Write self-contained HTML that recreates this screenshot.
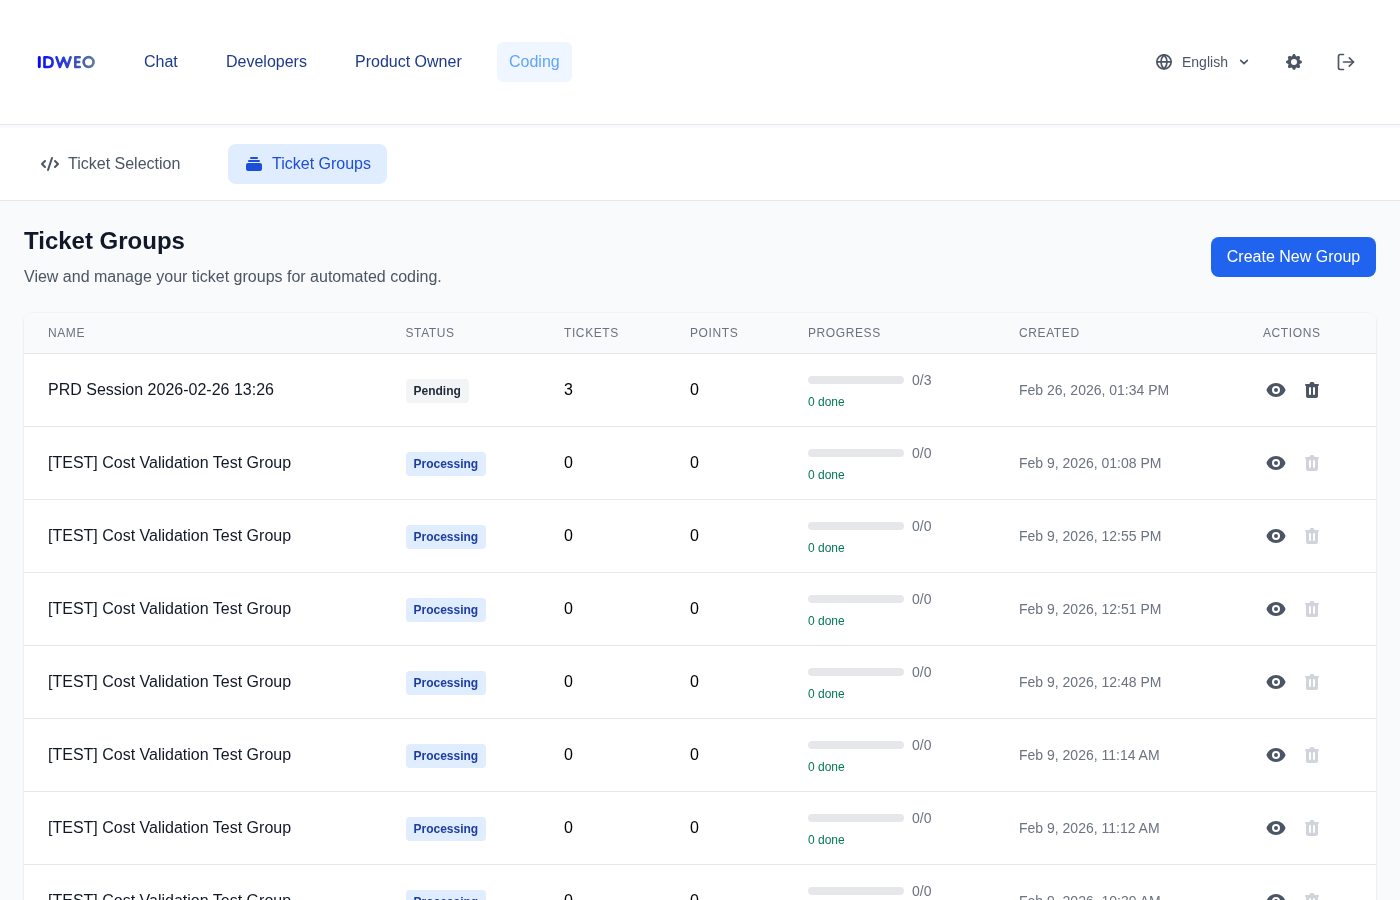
<!DOCTYPE html>
<html lang="en">
<head>
<meta charset="utf-8">
<title>IDWEO - Ticket Groups</title>
<style>
*{box-sizing:border-box;margin:0;padding:0}
html,body{width:1400px;height:900px;overflow:hidden}
body{font-family:"Liberation Sans",sans-serif;background:#f9fafb;color:#111827;position:relative;-webkit-font-smoothing:antialiased;will-change:transform}
svg{display:block}
/* ---------- top header ---------- */
.top{position:absolute;left:0;top:0;width:1400px;height:125px;background:#fff;border-bottom:1px solid #e5e7eb}
.nav{position:absolute;top:42px;height:40px;line-height:40px;padding:0 12px;font-size:16px;color:#1e3a8a;border-radius:6px;white-space:nowrap}
.nav.on{background:#eff6ff;color:#60a5fa}
.lang{position:absolute;left:1182px;top:52px;height:20px;line-height:20px;font-size:14px;color:#4b5563}
.ico{position:absolute}
/* ---------- sub nav ---------- */
.sub{position:absolute;left:0;top:128px;width:1400px;height:73px;background:#fff;border-bottom:1px solid #e5e7eb}
.tab{position:absolute;top:16px;height:40px;line-height:40px;padding:0 16px 0 44px;font-size:16px;color:#4b5563;border-radius:8px;white-space:nowrap}
.tab svg{position:absolute;left:16px;top:10px}
.tab.on{background:#e0edfe;color:#1d4ed8}
/* ---------- page head ---------- */
h1{position:absolute;left:24px;top:225px;font-size:24px;line-height:32px;font-weight:700;color:#111827;white-space:nowrap}
.desc{position:absolute;left:24px;top:265px;font-size:16px;line-height:24px;color:#4b5563;white-space:nowrap}
.btn{position:absolute;left:1211px;top:237px;width:165px;height:40px;line-height:40px;text-align:center;background:#2063ee;color:#fff;font-size:16px;border-radius:8px;white-space:nowrap}
/* ---------- table card ---------- */
.card{position:absolute;left:24px;top:313px;width:1352px;height:640px;background:#fff;border-radius:8px;box-shadow:0 0 0 1px rgba(0,0,0,.025),0 1px 3px rgba(0,0,0,.07);overflow:hidden}
.thead{position:absolute;left:0;top:0;width:100%;height:41px;background:#f9fafb;border-bottom:1px solid #e5e7eb}
.th{position:absolute;top:12px;font-size:12px;line-height:16px;letter-spacing:.6px;color:#6b7280;text-transform:uppercase;white-space:nowrap}
.row{position:absolute;left:0;width:100%;height:73px;border-bottom:1px solid #e5e7eb}
.c{position:absolute;white-space:nowrap}
.name{left:24px;top:24px;font-size:16px;line-height:24px;color:#111827}
.badge{left:381.5px;top:25px;height:24px;line-height:24px;padding:0 8px;font-size:12px;font-weight:700;border-radius:4px}
.badge.pend{background:#f3f4f6;color:#1f2937}
.badge.proc{background:#e0edfe;color:#1d3da3}
.num{top:24px;font-size:16px;line-height:24px;color:#000}
.bar{left:784px;top:22px;width:96px;height:8px;border-radius:4px;background:#e5e7eb}
.frac{left:888px;top:16px;font-size:14px;line-height:20px;color:#6b7280}
.done{left:784px;top:40px;font-size:12px;line-height:16px;color:#047857}
.date{left:995px;top:26px;font-size:14px;line-height:20px;color:#6b7280}
.eye{left:1242px;top:26px}
.trash{left:1278px;top:26px}
</style>
</head>
<body>

<div class="top">
  <svg class="ico" style="left:34px;top:52px" width="66" height="20" viewBox="34 51.75 66 20">
    <defs><linearGradient id="lg" gradientUnits="userSpaceOnUse" x1="37" y1="0" x2="95" y2="0">
      <stop offset="0" stop-color="#0404ff"/><stop offset=".2" stop-color="#1620f0"/><stop offset=".46" stop-color="#2a3cd6"/><stop offset=".72" stop-color="#3f56b6"/><stop offset="1" stop-color="#607e9a"/></linearGradient></defs>
    <g fill="none" stroke="url(#lg)" stroke-linecap="round" stroke-linejoin="round">
      <path stroke-width="2.9" d="M39.300 57.150V66.600"/>
      <path stroke-width="2.600" d="M44.500 56.950V66.800H47.300C50.900 66.800 52.650 64.700 52.650 61.875C52.650 59.050 50.900 56.950 47.300 56.950Z"/>
      <path stroke-width="2.600" d="M56.500 57.000L59.900 66.700 63.550 57.500 67.200 66.700 70.600 57.000"/>
      <path stroke-width="2.500" d="M79.800 56.900H75.300V66.850H79.800M75.300 61.850H79.200"/>
      <ellipse stroke-width="2.700" cx="88.600" cy="61.850" rx="4.950" ry="4.900"/>
    </g>
  </svg>
  <div class="nav" style="left:132px">Chat</div>
  <div class="nav" style="left:214px">Developers</div>
  <div class="nav" style="left:343px">Product Owner</div>
  <div class="nav on" style="left:497px">Coding</div>

  <svg class="ico" style="left:1156px;top:54px" width="16" height="16" viewBox="0 0 16 16" fill="none" stroke="#4b5563" stroke-width="1.700" stroke-linecap="round" stroke-linejoin="round"><circle cx="8" cy="7.900" r="7.100"/><path d="M0.900 7.900h14.200"/><path d="M8 0.800C9.900 2.800 11.050 5.300 11.050 7.900C11.050 10.500 9.900 13.000 8 15.000C6.100 13.000 4.950 10.500 4.950 7.900C4.950 5.300 6.100 2.800 8 0.800Z"/></svg>
  <div class="lang">English</div>
  <svg class="ico" style="left:1236px;top:54px" width="16" height="16" viewBox="0 0 24 24" fill="none" stroke="#4b5563" stroke-width="2.4" stroke-linecap="round" stroke-linejoin="round"><path d="M7 9.5l5 5 5-5"/></svg>

  <svg class="ico" style="left:1284px;top:52px" width="20" height="20" viewBox="0 0 20 20" fill="#4b5563"><path fill-rule="evenodd" clip-rule="evenodd" d="M11.49 3.17c-.38-1.56-2.6-1.56-2.98 0a1.532 1.532 0 01-2.286.948c-1.372-.836-2.942.734-2.106 2.106.54.886.061 2.042-.947 2.287-1.561.379-1.561 2.6 0 2.978a1.532 1.532 0 01.947 2.287c-.836 1.372.734 2.942 2.106 2.106a1.532 1.532 0 012.287.947c.379 1.561 2.6 1.561 2.978 0a1.533 1.533 0 012.287-.947c1.372.836 2.942-.734 2.106-2.106a1.533 1.533 0 01.947-2.287c1.561-.379 1.561-2.6 0-2.978a1.532 1.532 0 01-.947-2.287c.836-1.372-.734-2.942-2.106-2.106a1.532 1.532 0 01-2.287-.947zM10 13a3 3 0 100-6 3 3 0 000 6z"/></svg>

  <svg class="ico" style="left:1336px;top:52px" width="20" height="20" viewBox="0 0 24 24" fill="none" stroke="#4b5563" stroke-width="2" stroke-linecap="round" stroke-linejoin="round"><path d="M9 21H5a2 2 0 0 1-2-2V5a2 2 0 0 1 2-2h4"/><polyline points="16 17 21 12 16 7"/><line x1="21" y1="12" x2="9" y2="12"/></svg>
</div>

<div class="sub">
  <div class="tab" style="left:24px">
    <svg width="20" height="20" viewBox="0 0 20 20" fill="#4b5563"><path fill-rule="evenodd" d="M12.316 3.051a1 1 0 01.633 1.265l-4 12a1 1 0 11-1.898-.632l4-12a1 1 0 011.265-.633zM5.707 6.293a1 1 0 010 1.414L3.414 10l2.293 2.293a1 1 0 11-1.414 1.414l-3-3a1 1 0 010-1.414l3-3a1 1 0 011.414 0zm8.586 0a1 1 0 011.414 0l3 3a1 1 0 010 1.414l-3 3a1 1 0 11-1.414-1.414L16.586 10l-2.293-2.293a1 1 0 010-1.414z" clip-rule="evenodd"/></svg>
    Ticket Selection
  </div>
  <div class="tab on" style="left:228px">
    <svg width="20" height="20" viewBox="0 0 20 20" fill="#1d4ed8"><path d="M7 3a1 1 0 000 2h6a1 1 0 100-2H7zM4 7a1 1 0 011-1h10a1 1 0 110 2H5a1 1 0 01-1-1zM2 11a2 2 0 012-2h12a2 2 0 012 2v4a2 2 0 01-2 2H4a2 2 0 01-2-2v-4z"/></svg>
    Ticket Groups
  </div>
</div>

<h1>Ticket Groups</h1>
<div class="desc">View and manage your ticket groups for automated coding.</div>
<div class="btn">Create New Group</div>

<div class="card" id="card">
  <div class="thead">
    <div class="th" style="left:24px">Name</div>
    <div class="th" style="left:381.5px">Status</div>
    <div class="th" style="left:540px">Tickets</div>
    <div class="th" style="left:666px">Points</div>
    <div class="th" style="left:784px">Progress</div>
    <div class="th" style="left:995px">Created</div>
    <div class="th" style="left:1239px">Actions</div>
  </div>
  <div class="row" style="top:41px">
    <div class="c name">PRD Session 2026-02-26 13:26</div>
    <div class="c badge pend">Pending</div>
    <div class="c num" style="left:540px">3</div>
    <div class="c num" style="left:666px">0</div>
    <div class="c bar"></div>
    <div class="c frac">0/3</div>
    <div class="c done">0 done</div>
    <div class="c date">Feb 26, 2026, 01:34 PM</div>
    <svg class="c eye" width="20" height="20" viewBox="0 0 20 20" fill="#4b5563"><path d="M10 12a2 2 0 100-4 2 2 0 000 4z"/><path fill-rule="evenodd" d="M.458 10C1.732 5.943 5.522 3 10 3s8.268 2.943 9.542 7c-1.274 4.057-5.064 7-9.542 7S1.732 14.057.458 10zM14 10a4 4 0 11-8 0 4 4 0 018 0z" clip-rule="evenodd"/></svg>
    <svg class="c trash" width="20" height="20" viewBox="0 0 20 20" fill="#4b5563"><path fill-rule="evenodd" d="M9 2a1 1 0 00-.894.553L7.382 4H4a1 1 0 000 2v10a2 2 0 002 2h8a2 2 0 002-2V6a1 1 0 100-2h-3.382l-.724-1.447A1 1 0 0011 2H9zM7 8a1 1 0 012 0v6a1 1 0 11-2 0V8zm5-1a1 1 0 00-1 1v6a1 1 0 102 0V8a1 1 0 00-1-1z" clip-rule="evenodd"/></svg>
  </div>
  <div class="row" style="top:114px">
    <div class="c name">[TEST] Cost Validation Test Group</div>
    <div class="c badge proc">Processing</div>
    <div class="c num" style="left:540px">0</div>
    <div class="c num" style="left:666px">0</div>
    <div class="c bar"></div>
    <div class="c frac">0/0</div>
    <div class="c done">0 done</div>
    <div class="c date">Feb 9, 2026, 01:08 PM</div>
    <svg class="c eye" width="20" height="20" viewBox="0 0 20 20" fill="#4b5563"><path d="M10 12a2 2 0 100-4 2 2 0 000 4z"/><path fill-rule="evenodd" d="M.458 10C1.732 5.943 5.522 3 10 3s8.268 2.943 9.542 7c-1.274 4.057-5.064 7-9.542 7S1.732 14.057.458 10zM14 10a4 4 0 11-8 0 4 4 0 018 0z" clip-rule="evenodd"/></svg>
    <svg class="c trash" width="20" height="20" viewBox="0 0 20 20" fill="#d1d5db"><path fill-rule="evenodd" d="M9 2a1 1 0 00-.894.553L7.382 4H4a1 1 0 000 2v10a2 2 0 002 2h8a2 2 0 002-2V6a1 1 0 100-2h-3.382l-.724-1.447A1 1 0 0011 2H9zM7 8a1 1 0 012 0v6a1 1 0 11-2 0V8zm5-1a1 1 0 00-1 1v6a1 1 0 102 0V8a1 1 0 00-1-1z" clip-rule="evenodd"/></svg>
  </div>
  <div class="row" style="top:187px">
    <div class="c name">[TEST] Cost Validation Test Group</div>
    <div class="c badge proc">Processing</div>
    <div class="c num" style="left:540px">0</div>
    <div class="c num" style="left:666px">0</div>
    <div class="c bar"></div>
    <div class="c frac">0/0</div>
    <div class="c done">0 done</div>
    <div class="c date">Feb 9, 2026, 12:55 PM</div>
    <svg class="c eye" width="20" height="20" viewBox="0 0 20 20" fill="#4b5563"><path d="M10 12a2 2 0 100-4 2 2 0 000 4z"/><path fill-rule="evenodd" d="M.458 10C1.732 5.943 5.522 3 10 3s8.268 2.943 9.542 7c-1.274 4.057-5.064 7-9.542 7S1.732 14.057.458 10zM14 10a4 4 0 11-8 0 4 4 0 018 0z" clip-rule="evenodd"/></svg>
    <svg class="c trash" width="20" height="20" viewBox="0 0 20 20" fill="#d1d5db"><path fill-rule="evenodd" d="M9 2a1 1 0 00-.894.553L7.382 4H4a1 1 0 000 2v10a2 2 0 002 2h8a2 2 0 002-2V6a1 1 0 100-2h-3.382l-.724-1.447A1 1 0 0011 2H9zM7 8a1 1 0 012 0v6a1 1 0 11-2 0V8zm5-1a1 1 0 00-1 1v6a1 1 0 102 0V8a1 1 0 00-1-1z" clip-rule="evenodd"/></svg>
  </div>
  <div class="row" style="top:260px">
    <div class="c name">[TEST] Cost Validation Test Group</div>
    <div class="c badge proc">Processing</div>
    <div class="c num" style="left:540px">0</div>
    <div class="c num" style="left:666px">0</div>
    <div class="c bar"></div>
    <div class="c frac">0/0</div>
    <div class="c done">0 done</div>
    <div class="c date">Feb 9, 2026, 12:51 PM</div>
    <svg class="c eye" width="20" height="20" viewBox="0 0 20 20" fill="#4b5563"><path d="M10 12a2 2 0 100-4 2 2 0 000 4z"/><path fill-rule="evenodd" d="M.458 10C1.732 5.943 5.522 3 10 3s8.268 2.943 9.542 7c-1.274 4.057-5.064 7-9.542 7S1.732 14.057.458 10zM14 10a4 4 0 11-8 0 4 4 0 018 0z" clip-rule="evenodd"/></svg>
    <svg class="c trash" width="20" height="20" viewBox="0 0 20 20" fill="#d1d5db"><path fill-rule="evenodd" d="M9 2a1 1 0 00-.894.553L7.382 4H4a1 1 0 000 2v10a2 2 0 002 2h8a2 2 0 002-2V6a1 1 0 100-2h-3.382l-.724-1.447A1 1 0 0011 2H9zM7 8a1 1 0 012 0v6a1 1 0 11-2 0V8zm5-1a1 1 0 00-1 1v6a1 1 0 102 0V8a1 1 0 00-1-1z" clip-rule="evenodd"/></svg>
  </div>
  <div class="row" style="top:333px">
    <div class="c name">[TEST] Cost Validation Test Group</div>
    <div class="c badge proc">Processing</div>
    <div class="c num" style="left:540px">0</div>
    <div class="c num" style="left:666px">0</div>
    <div class="c bar"></div>
    <div class="c frac">0/0</div>
    <div class="c done">0 done</div>
    <div class="c date">Feb 9, 2026, 12:48 PM</div>
    <svg class="c eye" width="20" height="20" viewBox="0 0 20 20" fill="#4b5563"><path d="M10 12a2 2 0 100-4 2 2 0 000 4z"/><path fill-rule="evenodd" d="M.458 10C1.732 5.943 5.522 3 10 3s8.268 2.943 9.542 7c-1.274 4.057-5.064 7-9.542 7S1.732 14.057.458 10zM14 10a4 4 0 11-8 0 4 4 0 018 0z" clip-rule="evenodd"/></svg>
    <svg class="c trash" width="20" height="20" viewBox="0 0 20 20" fill="#d1d5db"><path fill-rule="evenodd" d="M9 2a1 1 0 00-.894.553L7.382 4H4a1 1 0 000 2v10a2 2 0 002 2h8a2 2 0 002-2V6a1 1 0 100-2h-3.382l-.724-1.447A1 1 0 0011 2H9zM7 8a1 1 0 012 0v6a1 1 0 11-2 0V8zm5-1a1 1 0 00-1 1v6a1 1 0 102 0V8a1 1 0 00-1-1z" clip-rule="evenodd"/></svg>
  </div>
  <div class="row" style="top:406px">
    <div class="c name">[TEST] Cost Validation Test Group</div>
    <div class="c badge proc">Processing</div>
    <div class="c num" style="left:540px">0</div>
    <div class="c num" style="left:666px">0</div>
    <div class="c bar"></div>
    <div class="c frac">0/0</div>
    <div class="c done">0 done</div>
    <div class="c date">Feb 9, 2026, 11:14 AM</div>
    <svg class="c eye" width="20" height="20" viewBox="0 0 20 20" fill="#4b5563"><path d="M10 12a2 2 0 100-4 2 2 0 000 4z"/><path fill-rule="evenodd" d="M.458 10C1.732 5.943 5.522 3 10 3s8.268 2.943 9.542 7c-1.274 4.057-5.064 7-9.542 7S1.732 14.057.458 10zM14 10a4 4 0 11-8 0 4 4 0 018 0z" clip-rule="evenodd"/></svg>
    <svg class="c trash" width="20" height="20" viewBox="0 0 20 20" fill="#d1d5db"><path fill-rule="evenodd" d="M9 2a1 1 0 00-.894.553L7.382 4H4a1 1 0 000 2v10a2 2 0 002 2h8a2 2 0 002-2V6a1 1 0 100-2h-3.382l-.724-1.447A1 1 0 0011 2H9zM7 8a1 1 0 012 0v6a1 1 0 11-2 0V8zm5-1a1 1 0 00-1 1v6a1 1 0 102 0V8a1 1 0 00-1-1z" clip-rule="evenodd"/></svg>
  </div>
  <div class="row" style="top:479px">
    <div class="c name">[TEST] Cost Validation Test Group</div>
    <div class="c badge proc">Processing</div>
    <div class="c num" style="left:540px">0</div>
    <div class="c num" style="left:666px">0</div>
    <div class="c bar"></div>
    <div class="c frac">0/0</div>
    <div class="c done">0 done</div>
    <div class="c date">Feb 9, 2026, 11:12 AM</div>
    <svg class="c eye" width="20" height="20" viewBox="0 0 20 20" fill="#4b5563"><path d="M10 12a2 2 0 100-4 2 2 0 000 4z"/><path fill-rule="evenodd" d="M.458 10C1.732 5.943 5.522 3 10 3s8.268 2.943 9.542 7c-1.274 4.057-5.064 7-9.542 7S1.732 14.057.458 10zM14 10a4 4 0 11-8 0 4 4 0 018 0z" clip-rule="evenodd"/></svg>
    <svg class="c trash" width="20" height="20" viewBox="0 0 20 20" fill="#d1d5db"><path fill-rule="evenodd" d="M9 2a1 1 0 00-.894.553L7.382 4H4a1 1 0 000 2v10a2 2 0 002 2h8a2 2 0 002-2V6a1 1 0 100-2h-3.382l-.724-1.447A1 1 0 0011 2H9zM7 8a1 1 0 012 0v6a1 1 0 11-2 0V8zm5-1a1 1 0 00-1 1v6a1 1 0 102 0V8a1 1 0 00-1-1z" clip-rule="evenodd"/></svg>
  </div>
  <div class="row" style="top:552px">
    <div class="c name">[TEST] Cost Validation Test Group</div>
    <div class="c badge proc">Processing</div>
    <div class="c num" style="left:540px">0</div>
    <div class="c num" style="left:666px">0</div>
    <div class="c bar"></div>
    <div class="c frac">0/0</div>
    <div class="c done">0 done</div>
    <div class="c date">Feb 9, 2026, 10:39 AM</div>
    <svg class="c eye" width="20" height="20" viewBox="0 0 20 20" fill="#4b5563"><path d="M10 12a2 2 0 100-4 2 2 0 000 4z"/><path fill-rule="evenodd" d="M.458 10C1.732 5.943 5.522 3 10 3s8.268 2.943 9.542 7c-1.274 4.057-5.064 7-9.542 7S1.732 14.057.458 10zM14 10a4 4 0 11-8 0 4 4 0 018 0z" clip-rule="evenodd"/></svg>
    <svg class="c trash" width="20" height="20" viewBox="0 0 20 20" fill="#d1d5db"><path fill-rule="evenodd" d="M9 2a1 1 0 00-.894.553L7.382 4H4a1 1 0 000 2v10a2 2 0 002 2h8a2 2 0 002-2V6a1 1 0 100-2h-3.382l-.724-1.447A1 1 0 0011 2H9zM7 8a1 1 0 012 0v6a1 1 0 11-2 0V8zm5-1a1 1 0 00-1 1v6a1 1 0 102 0V8a1 1 0 00-1-1z" clip-rule="evenodd"/></svg>
  </div>
</div>

</body>
</html>
